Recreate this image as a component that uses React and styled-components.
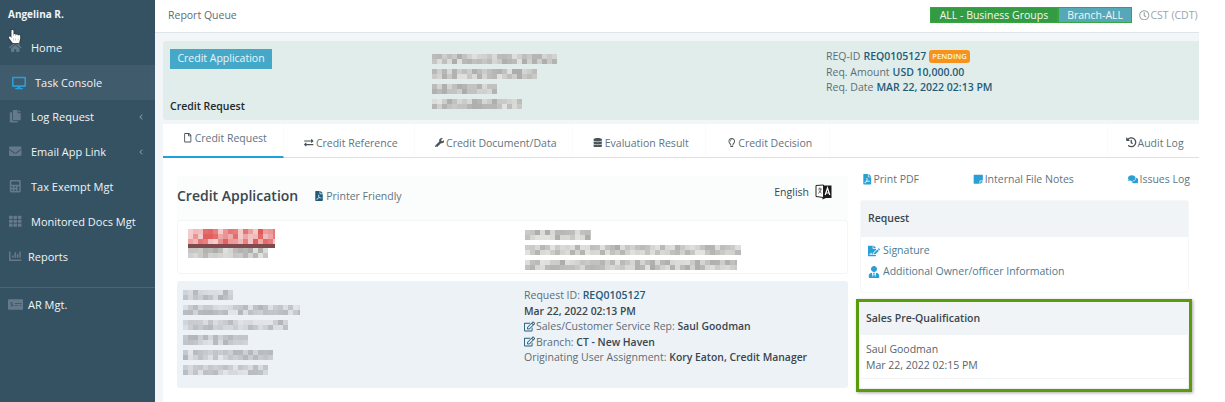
import React from "react";
import styled, { createGlobalStyle } from "styled-components";
import {
  FaHome, FaDesktop, FaCopy, FaEnvelope, FaCalculator, FaTh, FaChartBar, FaMoneyCheckAlt,
  FaRegFile, FaExchangeAlt, FaWrench, FaDatabase, FaRegLightbulb, FaHistory, FaFilePdf,
  FaStickyNote, FaComments, FaFileSignature, FaUserTie, FaRegEdit, FaRegClock,
  FaChevronLeft, FaHandPointer,
} from "react-icons/fa";

const Global = createGlobalStyle`
  html, body { margin: 0; padding: 0; background: #fff; }
  body { font-family: "Open Sans", "Noto Sans", sans-serif; font-size: 11px; color: #4d5b63; }
  * { box-sizing: border-box; }
`;

const Page = styled.div`
  position: relative;
  display: flex;
  width: 1225px;
  height: 402px;
  overflow: hidden;
`;

const Sidebar = styled.aside`
  width: 155px;
  flex: none;
  background: #355263;
  color: #f0f4f6;
`;
const UserName = styled.div`
  height: 30px;
  padding: 7px 8px 0;
  font-size: 10px;
  font-weight: 700;
  line-height: 14px;
`;
const NavItem = styled.div`
  height: 35px;
  display: flex;
  align-items: center;
  padding-left: ${(p) => p.$pad ?? 9}px;
  padding-bottom: ${(p) => (p.$lift ? 2 : 0)}px;
  background: ${(p) => (p.$active ? "#3f5b6c" : "transparent")};
  font-size: 11px;
`;
const NavIcon = styled.span`
  width: ${(p) => p.$w ?? 22}px;
  display: flex;
  font-size: ${(p) => p.$size ?? 12.5}px;
  color: ${(p) => (p.$active ? "#2a9fd6" : "#64798a")};
  svg { display: block; }
`;
const Caret = styled.span`
  margin-left: auto;
  margin-right: 11px;
  font-size: 6px;
  display: flex;
  color: #7d92a0;
`;
const NavDivider = styled.div`
  height: 1px;
  margin-top: 12px;
  background: #4b6573;
`;
const Cursor = styled.span`
  position: absolute;
  left: 8px;
  top: 30px;
  font-size: 13px;
  color: #fff;
  filter: drop-shadow(0 0 1px #222);
  svg { display: block; }
`;

const Main = styled.main`
  width: 1044px;
  flex: none;
  display: flex;
  flex-direction: column;
  background: #f3f6f8;
`;
const TopBar = styled.header`
  height: 33px;
  flex: none;
  display: flex;
  align-items: center;
  padding: 0 0 2px 13px;
  background: #fff;
  border-bottom: 1px solid #dfe4e9;
  font-size: 10.5px;
  color: #5d6d75;
`;
const TopRight = styled.div`
  margin-left: auto;
  display: flex;
  align-items: center;
`;
const Badge = styled.span`
  height: 16px;
  line-height: 14px;
  padding: 0 ${(p) => p.$pad}px;
  background: ${(p) => p.$bg};
  border: 1px solid #37a63f;
  color: #f4f8f4;
  font-size: 10.5px;
`;
const Zone = styled.span`
  display: flex;
  align-items: center;
  gap: 1px;
  margin-left: 7px;
  width: 60px;
  white-space: nowrap;
  color: #9aa5ac;
  font-size: 10.5px;
`;

const Body = styled.div`
  padding: 8px 0 0 8px;
  flex: 1;
  display: flex;
  flex-direction: column;
`;
const Summary = styled.section`
  height: 79px;
  flex: none;
  display: grid;
  grid-template-columns: 262px 394px 1fr;
  padding: 8px 7px 7px;
  background: #e0edea;
  border-radius: 3px 0 0 3px;
`;
const SummaryLeft = styled.div`
  display: flex;
  flex-direction: column;
  justify-content: space-between;
  align-items: flex-start;
`;
const AppButton = styled.span`
  height: 20px;
  width: 102px;
  line-height: 19px;
  text-align: center;
  background: #45a8c8;
  color: #eaf6fa;
  font-size: 10.5px;
`;
const SummaryTitle = styled.b`
  color: #20282c;
  font-size: 10.5px;
  font-weight: 600;
`;
const BlurStack = styled.div`
  display: flex;
  flex-direction: column;
  gap: ${(p) => p.$gap ?? 3}px;
  padding-top: ${(p) => p.$top ?? 0}px;
  padding-left: ${(p) => p.$left ?? 0}px;
`;
const ReqInfo = styled.div`
  font-size: 10.5px;
  line-height: 15.5px;
  color: #5e6d75;
`;
const Value = styled.b`
  color: #1f5c7a;
  font-weight: 600;
  margin-left: 3px;
`;
const Pending = styled.span`
  display: inline-block;
  margin-left: 3px;
  padding: 0 3px;
  height: 13px;
  line-height: 13px;
  background: #f5931e;
  color: #fff2dc;
  border-radius: 3px;
  font-size: 7.7px;
  font-weight: 600;
  vertical-align: 1px;
`;

const Tabs = styled.nav`
  margin-top: 4px;
  height: 34px;
  flex: none;
  display: flex;
  background: #fff;
  border-bottom: 1px solid #cfe6f2;
`;
const Tab = styled.div`
  width: ${(p) => p.$w}px;
  height: ${(p) => (p.$active ? 34 : 33)}px;
  display: flex;
  align-items: center;
  justify-content: center;
  gap: 1px;
  padding-top: ${(p) => (p.$active ? 0 : 4)}px;
  padding-bottom: ${(p) => (p.$active ? 4 : 0)}px;
  padding-left: 4px;
  font-size: 10.5px;
  color: #5f7480;
  border-right: 1px solid #fafbfb;
  border-bottom: ${(p) => (p.$active ? "2px solid #1fa2dc" : "none")};
  svg { font-size: 9.5px; color: #4a5358; margin-right: 1px; }
`;
const TabEnd = styled(Tab)`
  margin-left: auto;
  border-left: 1px solid #fafbfb;
  border-right: none;
  justify-content: flex-start;
  padding-left: 18px;
  svg { font-size: 10.5px; margin-right: 0; }
`;

const Content = styled.div`
  flex: 1;
  display: flex;
  background: #fff;
  padding: 18px 7px 0 14px;
`;
const LeftCol = styled.div`
  width: 671px;
  flex: none;
`;
const TitleRow = styled.div`
  height: 44px;
  display: flex;
  align-items: center;
  padding-bottom: 5px;
  background: #fbfcfc;
`;
const PageTitle = styled.h2`
  margin: 0;
  font-size: 14px;
  font-weight: 600;
  color: #38464e;
`;
const PrintLink = styled.span`
  display: flex;
  align-items: center;
  gap: 2px;
  margin-left: 16px;
  margin-top: 1px;
  font-size: 10.5px;
  color: #5f7480;
  svg { color: #1f5c7a; font-size: 10px; }
`;
const Lang = styled.span`
  margin-left: auto;
  margin-right: 16px;
  margin-top: -7px;
  display: flex;
  align-items: center;
  gap: 6px;
  font-size: 10.5px;
  color: #38464e;
`;
const InfoCard = styled.div`
  height: 54px;
  display: grid;
  grid-template-columns: 347px 1fr;
  background: #fff;
  border: 1px solid #f3f5f6;
  border-radius: 3px;
`;
const DetailCard = styled.div`
  margin-top: 7px;
  height: 107px;
  display: grid;
  grid-template-columns: 347px 1fr;
  background: #edf2f7;
  border-radius: 3px;
`;
const DetailText = styled.div`
  padding-top: 7px;
  font-size: 10.5px;
  line-height: 15.5px;
  color: #5e6d75;
`;
const DetailLine = styled.div`
  white-space: pre;
  svg { font-size: 11px; color: #1f5c7a; margin-right: 1px; vertical-align: -1.5px; }
`;
const Strong = styled.b`
  font-weight: 600;
  font-size: 10.4px;
  color: #38464e;
`;
const IdLink = styled.b`
  font-weight: 600;
  color: #1f5c7a;
`;

const RightCol = styled.div`
  margin-left: 8px;
  width: 336px;
  flex: none;
`;
const LinkRow = styled.div`
  display: flex;
  justify-content: space-between;
  height: 28px;
  margin-top: -4px;
  padding: 0 2px 0 6px;
`;
const TopLink = styled.span`
  display: flex;
  align-items: flex-start;
  gap: 1px;
  font-size: 10.5px;
  line-height: 15px;
  color: #5f7480;
  svg { font-size: 10.5px; color: #2a9fd6; margin-top: 2px; }
`;
const Panel = styled.div`
  margin-left: 4px;
  margin-right: 3px;
  height: 93px;
  background: #fff;
  border: 1px solid #f5f7f8;
  border-radius: 3px;
`;
const PanelHead = styled.div`
  height: ${(p) => p.$h}px;
  display: flex;
  align-items: center;
  padding: 0 0 2px 7px;
  background: #f1f4f6;
  font-size: 10.5px;
  font-weight: 600;
  color: #38464e;
`;
const PanelLinks = styled.div`
  padding: 6px 7px;
  display: flex;
  flex-direction: column;
  gap: 6px;
`;
const PanelLink = styled.span`
  display: flex;
  align-items: center;
  gap: 3px;
  font-size: 10.5px;
  line-height: 15px;
  color: #4a7c92;
  svg { width: 12px; font-size: 12px; color: #2a9fd6; }
`;
const Highlight = styled.div`
  margin-top: 6px;
  height: 93px;
  border: 3px solid #599b0b;
  box-shadow: 1px 1px 3px rgba(0,0,0,.35), inset 0 0 2px rgba(0,0,0,.25);
`;
const HighlightBody = styled.div`
  height: 44px;
  padding: 6px 7px 0;
  font-size: 10.5px;
  line-height: 16px;
  color: #56646c;
  border-bottom: 1px solid #f1f3f4;
`;

const MosaicWrap = styled.svg`
  display: block;
  filter: blur(0.7px);
`;

function Mosaic({ w, h = 10, seed = 1, hue = "gray", cell = 5 }) {
  const rects = [];
  const hash = (a, b) => {
    const n = Math.sin(a * 12.9898 + b * 78.233 + seed * 37.719) * 43758.5453;
    return n - Math.floor(n);
  };
  for (let y = 0; y < h; y += cell) {
    for (let x = 0; x < w; x += cell) {
      const v = hash(x, y);
      let fill;
      if (hue === "red") {
        fill = `rgb(${225 + v * 20}, ${90 + v * 120}, ${90 + v * 120})`;
      } else if (hue === "blue") {
        const g = 178 + v * 48;
        fill = `rgb(${g}, ${g + 3}, ${g + 8})`;
      } else {
        const g = 172 + v * 55;
        fill = `rgb(${g}, ${g}, ${g - 2})`;
      }
      rects.push(<rect key={`${x}-${y}`} x={x} y={y} width={cell} height={cell} fill={fill} />);
    }
  }
  return <MosaicWrap width={w} height={h} viewBox={`0 0 ${w} ${h}`}>{rects}</MosaicWrap>;
}

const LogoBar = styled.div`
  width: 87px;
  height: 4px;
  background: #7f4a4c;
`;

function LanguageBook() {
  return (
    <svg width="17" height="16" viewBox="0 0 17 16" aria-hidden="true">
      <path d="M1 1.5 L8.5 1 V13.5 L1 12.5 Z" fill="#fff" stroke="#222" strokeWidth="1" />
      <path d="M3.2 5 H6.6 M4.9 3.4 V5 M6 5 C5.8 7 4.6 8.6 3.2 9.4 M4 6.4 C4.6 7.6 5.6 8.6 6.6 9.2" fill="none" stroke="#444" strokeWidth=".8" />
      <path d="M8.5 1.5 H16.5 V14 H11 L7.5 15.5 V13.5 H8.5 Z" fill="#1a1a1a" />
      <path d="M10.2 11 L12.5 4 L14.8 11 M11 9 H14" fill="none" stroke="#fff" strokeWidth="1.2" />
    </svg>
  );
}

const nav = [
  { icon: <FaCopy />, label: "Log Request", caret: true },
  { icon: <FaEnvelope />, label: "Email App Link", caret: true },
  { icon: <FaCalculator />, label: "Tax Exempt Mgt" },
  { icon: <FaTh />, label: "Monitored Docs Mgt" },
];

export default function App() {
  return (
    <Page>
      <Global />
      <Sidebar>
        <UserName>Angelina R.</UserName>
        <NavItem><NavIcon><FaHome /></NavIcon>Home</NavItem>
        <NavItem $active $pad={12}><NavIcon $active $w={23} $size={14}><FaDesktop /></NavIcon>Task Console</NavItem>
        {nav.map((n) => (
          <NavItem key={n.label} $lift>
            <NavIcon>{n.icon}</NavIcon>
            {n.label}
            {n.caret && <Caret><FaChevronLeft /></Caret>}
          </NavItem>
        ))}
        <NavItem $lift><NavIcon $w={19}><FaChartBar /></NavIcon>Reports</NavItem>
        <NavDivider />
        <NavItem $pad={8} $lift><NavIcon $w={20} $size={15}><FaMoneyCheckAlt /></NavIcon>AR Mgt.</NavItem>
      </Sidebar>
      <Cursor><FaHandPointer /></Cursor>
      <Main>
        <TopBar>
          Report Queue
          <TopRight>
            <Badge $bg="#339b43" $pad={9}>ALL - Business Groups</Badge>
            <Badge $bg="#56a7b8" $pad={8}>Branch-ALL</Badge>
            <Zone><FaRegClock />CST (CDT)</Zone>
          </TopRight>
        </TopBar>
        <Body>
          <Summary>
            <SummaryLeft>
              <AppButton>Credit Application</AppButton>
              <SummaryTitle>Credit Request</SummaryTitle>
            </SummaryLeft>
            <BlurStack $top={5} $gap={5}>
              <Mosaic w={125} seed={3} />
              <Mosaic w={105} seed={5} />
              <Mosaic w={65} seed={7} />
              <Mosaic w={90} seed={11} />
            </BlurStack>
            <ReqInfo>
              <div>REQ-ID<Value>REQ0105127</Value><Pending>PENDING</Pending></div>
              <div>Req. Amount<Value>USD 10,000.00</Value></div>
              <div>Req. Date<Value>MAR 22, 2022 02:13 PM</Value></div>
            </ReqInfo>
          </Summary>
          <Tabs>
            <Tab $w={121} $active><FaRegFile />Credit Request</Tab>
            <Tab $w={131}><FaExchangeAlt />Credit Reference</Tab>
            <Tab $w={158}><FaWrench />Credit Document/Data</Tab>
            <Tab $w={133}><FaDatabase />Evaluation Result</Tab>
            <Tab $w={124}><FaRegLightbulb />Credit Decision</Tab>
            <TabEnd $w={92}><FaHistory />Audit Log</TabEnd>
          </Tabs>
          <Content>
            <LeftCol>
              <TitleRow>
                <PageTitle>Credit Application</PageTitle>
                <PrintLink><FaFilePdf />Printer Friendly</PrintLink>
                <Lang>English<LanguageBook /></Lang>
              </TitleRow>
              <InfoCard>
                <BlurStack $top={8} $left={10} $gap={0}>
                  <Mosaic w={87} h={15} seed={13} hue="red" />
                  <LogoBar />
                  <Mosaic w={80} h={10} seed={17} />
                </BlurStack>
                <BlurStack $top={9} $gap={5}>
                  <Mosaic w={66} seed={19} />
                  <Mosaic w={216} seed={23} />
                  <Mosaic w={212} seed={29} />
                </BlurStack>
              </InfoCard>
              <DetailCard>
                <BlurStack $top={9} $left={6} $gap={5}>
                  <Mosaic w={50} seed={31} hue="blue" />
                  <Mosaic w={117} seed={37} hue="blue" />
                  <Mosaic w={105} seed={41} hue="blue" />
                  <Mosaic w={65} seed={43} hue="blue" />
                  <Mosaic w={90} seed={47} hue="blue" />
                  <Mosaic w={85} seed={53} hue="blue" />
                </BlurStack>
                <DetailText>
                  <DetailLine>Request ID: <IdLink>REQ0105127</IdLink></DetailLine>
                  <DetailLine><Strong>Mar 22, 2022 02:13 PM</Strong></DetailLine>
                  <DetailLine><FaRegEdit />Sales/Customer Service Rep: <Strong>Saul Goodman</Strong></DetailLine>
                  <DetailLine><FaRegEdit />Branch: <Strong>CT - New Haven</Strong></DetailLine>
                  <DetailLine>Originating User Assignment: <Strong>Kory Eaton, Credit Manager</Strong></DetailLine>
                </DetailText>
              </DetailCard>
            </LeftCol>
            <RightCol>
              <LinkRow>
                <TopLink><FaFilePdf />Print PDF</TopLink>
                <TopLink><FaStickyNote />Internal File Notes</TopLink>
                <TopLink><FaComments />Issues Log</TopLink>
              </LinkRow>
              <Panel>
                <PanelHead $h={36}>Request</PanelHead>
                <PanelLinks>
                  <PanelLink><FaFileSignature />Signature</PanelLink>
                  <PanelLink><FaUserTie />Additional Owner/officer Information</PanelLink>
                </PanelLinks>
              </Panel>
              <Highlight>
                <PanelHead $h={33}>Sales Pre-Qualification</PanelHead>
                <HighlightBody>Saul Goodman<br />Mar 22, 2022 02:15 PM</HighlightBody>
              </Highlight>
            </RightCol>
          </Content>
        </Body>
      </Main>
    </Page>
  );
}
